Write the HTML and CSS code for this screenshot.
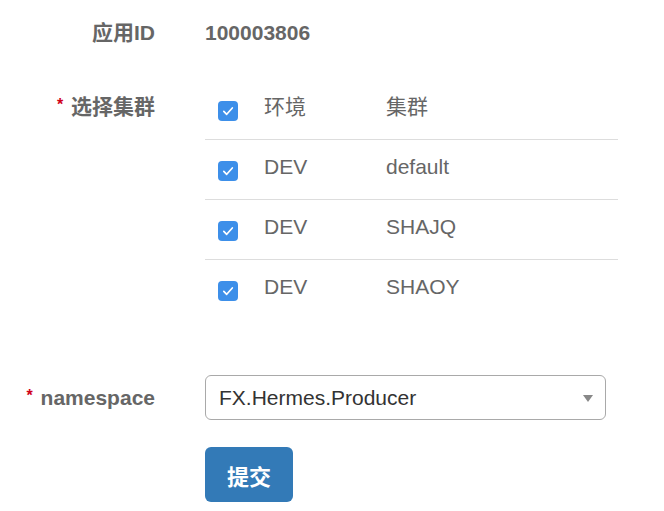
FILE: index.html
```html
<!DOCTYPE html>
<html lang="zh-CN">
<head>
<meta charset="utf-8">
<title>创建Namespace</title>
<link rel="stylesheet" href="styles.css">
</head>
<body>
<form class="form">
  <div class="row row-app">
    <div class="label">应用ID</div>
    <div class="control value">100003806</div>
  </div>

  <div class="row row-cluster">
    <div class="label label-table"><span class="req">*</span> 选择集群</div>
    <div class="control">
      <div class="table">
        <div class="tr">
          <div class="td td-check"><span class="cb"><svg viewBox="0 0 20 20" width="20" height="20"><rect x="0" y="0" width="20" height="20" rx="4" fill="#3d8fe9"/><path d="M5.8 10.4 L8.7 13.3 L14.3 7" fill="none" stroke="#fff" stroke-width="1.7" stroke-linecap="round" stroke-linejoin="round"/></svg></span></div>
          <div class="td td-env">环境</div>
          <div class="td td-cluster">集群</div>
        </div>
        <div class="tr">
          <div class="td td-check"><span class="cb"><svg viewBox="0 0 20 20" width="20" height="20"><rect x="0" y="0" width="20" height="20" rx="4" fill="#3d8fe9"/><path d="M5.8 10.4 L8.7 13.3 L14.3 7" fill="none" stroke="#fff" stroke-width="1.7" stroke-linecap="round" stroke-linejoin="round"/></svg></span></div>
          <div class="td td-env">DEV</div>
          <div class="td td-cluster">default</div>
        </div>
        <div class="tr">
          <div class="td td-check"><span class="cb"><svg viewBox="0 0 20 20" width="20" height="20"><rect x="0" y="0" width="20" height="20" rx="4" fill="#3d8fe9"/><path d="M5.8 10.4 L8.7 13.3 L14.3 7" fill="none" stroke="#fff" stroke-width="1.7" stroke-linecap="round" stroke-linejoin="round"/></svg></span></div>
          <div class="td td-env">DEV</div>
          <div class="td td-cluster">SHAJQ</div>
        </div>
        <div class="tr tr-last">
          <div class="td td-check"><span class="cb"><svg viewBox="0 0 20 20" width="20" height="20"><rect x="0" y="0" width="20" height="20" rx="4" fill="#3d8fe9"/><path d="M5.8 10.4 L8.7 13.3 L14.3 7" fill="none" stroke="#fff" stroke-width="1.7" stroke-linecap="round" stroke-linejoin="round"/></svg></span></div>
          <div class="td td-env">DEV</div>
          <div class="td td-cluster">SHAOY</div>
        </div>
      </div>
    </div>
  </div>

  <div class="row row-ns">
    <div class="label label-ns"><span class="req">*</span> namespace</div>
    <div class="control">
      <div class="select">
        <span class="select-text">FX.Hermes.Producer</span>
        <span class="caret"></span>
      </div>
    </div>
  </div>

  <div class="row row-submit">
    <div class="label"></div>
    <div class="control">
      <button type="button" class="btn">提交</button>
    </div>
  </div>
</form>
</body>
</html>
```

FILE: styles.css
```css
* { box-sizing: border-box; }

html, body {
  margin: 0;
  padding: 0;
  background: #ffffff;
}

body {
  font-family: "Liberation Sans", Arial, "Noto Sans CJK SC", sans-serif;
  font-size: 21px;
  color: #666666;
  width: 664px;
  height: 511px;
  overflow: hidden;
}

.form {
  display: flex;
  flex-direction: column;
}

.row {
  display: flex;
  align-items: flex-start;
}

.label {
  width: 155px;
  flex: none;
  text-align: right;
  font-weight: bold;
  color: #666666;
  line-height: 30px;
  white-space: nowrap;
}

.control {
  margin-left: 50px;
}

.req {
  color: #d0021b;
  font-size: 16px;
  position: relative;
  top: -4px;
  margin-right: 2px;
}

/* row 1 */
.row-app {
  padding-top: 18px;
}
.value {
  font-weight: bold;
  line-height: 30px;
  color: #666666;
}

/* cluster table */
.row-cluster {
  margin-top: 32px;
}
.label-table {
  padding-top: 12px;
}

.table {
  width: 413px;
}

.tr {
  display: flex;
  align-items: flex-start;
  padding: 12px 0 17px;
  border-bottom: 1px solid #dddddd;
  line-height: 30px;
  color: #666666;
}
.tr-last {
  border-bottom: none;
}

.td-check {
  width: 59px;
  padding-left: 13px;
}
.cb {
  display: block;
  width: 20px;
  height: 20px;
  margin-top: 9px;
}
.cb svg {
  display: block;
}
.td-env {
  width: 122px;
}

/* namespace */
.row-ns {
  margin-top: 56px;
}
.label-ns {
  line-height: 45px;
}

.select {
  width: 401px;
  height: 45px;
  border: 1px solid #a9a9a9;
  border-radius: 6px;
  display: flex;
  align-items: center;
  justify-content: space-between;
  padding: 0 12px 0 13px;
  color: #333333;
  background: #ffffff;
}
.select-text {
  line-height: 43px;
}
.caret {
  width: 0;
  height: 0;
  border-left: 5px solid transparent;
  border-right: 5px solid transparent;
  border-top: 7px solid #888888;
  margin-top: 1px;
}

/* submit */
.row-submit {
  margin-top: 25px;
}
.btn {
  width: 88px;
  height: 55px;
  border: none;
  border-radius: 6px;
  background: #337ab7;
  color: #ffffff;
  font-family: "Liberation Sans", Arial, "Noto Sans CJK SC", sans-serif;
  font-size: 22px;
  font-weight: bold;
  padding: 0;
  cursor: pointer;
}
```
